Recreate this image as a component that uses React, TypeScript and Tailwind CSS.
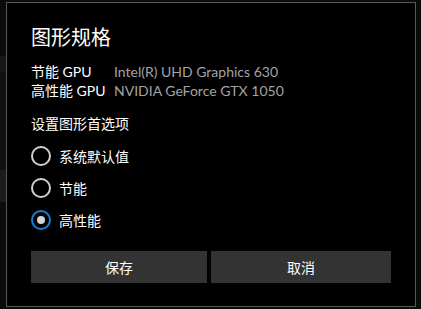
import { useState } from 'react'

const font = { fontFamily: '"Segoe UI", Lato, "Noto Sans CJK SC", sans-serif' }

const options = ['系统默认值', '节能', '高性能']

function Radio({ checked }: { checked: boolean }) {
  return checked ? (
    <span className="w-5 h-5 rounded-full border-2 border-[#1a7fd4] flex items-center justify-center">
      <span className="w-2 h-2 rounded-full bg-[#d4d4d4]" />
    </span>
  ) : (
    <span className="w-5 h-5 rounded-full border-2 border-[#cfcfcf]" />
  )
}

export default function App() {
  const [choice, setChoice] = useState(2)

  return (
    <div className="w-[421px] h-[309px] bg-[#0b0b0b] flex overflow-hidden" style={font}>
      {/* bits of the window behind */}
      <div className="w-[6px] flex flex-col">
        <div className="h-[56px]" />
        <div className="h-[16px] bg-[#161616]" />
        <div className="h-[98px] bg-[#101010]" />
        <div className="h-[32px] bg-[#1c1c1c]" />
      </div>
      <div className="mt-[2px] w-[410px] h-[305px] border border-[#595959] bg-black px-6 pt-5 flex flex-col text-white">
        <h1 className="text-[20px] leading-[28px]">图形规格</h1>
        <div className="mt-[11px] grid grid-cols-[83px_1fr] text-[14px] leading-[19px]">
          <span>节能 GPU</span>
          <span className="text-[#a3a3a3]">Intel(R) UHD Graphics 630</span>
          <span>高性能 GPU</span>
          <span className="text-[#a3a3a3]">NVIDIA GeForce GTX 1050</span>
        </div>
        <p className="mt-[14px] text-[14px] leading-[19px]">设置图形首选项</p>
        <div className="mt-[7px] flex flex-col">
          {options.map((o, i) => (
            <label key={o} className="h-8 flex items-center gap-[8px] text-[14px] cursor-pointer" onClick={() => setChoice(i)}>
              <Radio checked={choice === i} />
              <span>{o}</span>
            </label>
          ))}
        </div>
        <div className="mt-[15px] flex gap-1">
          <button className="w-[176px] h-8 bg-[#333333] text-[14px]">保存</button>
          <button className="flex-1 h-8 bg-[#333333] text-[14px]">取消</button>
        </div>
      </div>
    </div>
  )
}
